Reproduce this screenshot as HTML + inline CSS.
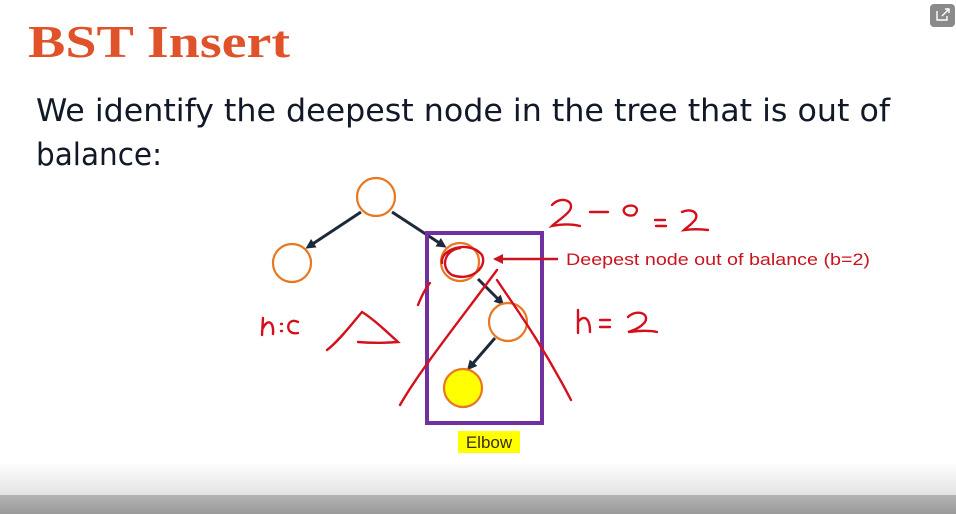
<!DOCTYPE html>
<html><head><style>
html,body{margin:0;padding:0;width:956px;height:514px;overflow:hidden;background:#fff;}
</style></head><body>
<svg width="956" height="514" viewBox="0 0 956 514" xmlns="http://www.w3.org/2000/svg" style="display:block">
<defs>
<linearGradient id="fade" x1="0" y1="0" x2="0" y2="1">
<stop offset="0" stop-color="#fff"/><stop offset="1" stop-color="#e2e2e2"/></linearGradient>
<linearGradient id="bar" x1="0" y1="0" x2="0" y2="1">
<stop offset="0" stop-color="#b4b4b4"/><stop offset="1" stop-color="#999"/></linearGradient>
<marker id="ar" markerWidth="10" markerHeight="10" refX="7" refY="5" orient="auto" markerUnits="userSpaceOnUse">
<path d="M0,0 L10,5 L0,10 Z" fill="#1e2a3a"/></marker>
<marker id="ar2" markerWidth="10" markerHeight="10" refX="8" refY="5" orient="auto" markerUnits="userSpaceOnUse">
<path d="M0,0 L10,5 L0,10 Z" fill="#c8141e"/></marker>
</defs>
<rect x="0" y="462" width="956" height="34" fill="url(#fade)"/>
<rect x="0" y="495" width="956" height="19" fill="url(#bar)"/>
<text x="28" y="57" font-family="Liberation Serif, serif" font-weight="bold" font-size="46" fill="#e0522a" textLength="262" lengthAdjust="spacingAndGlyphs">BST Insert</text>
<text x="36" y="121" font-family="DejaVu Sans Condensed, Liberation Sans, sans-serif" font-size="31" fill="#111827" textLength="854" lengthAdjust="spacingAndGlyphs">We identify the deepest node in the tree that is out of</text>
<text x="36" y="165" font-family="DejaVu Sans Condensed, Liberation Sans, sans-serif" font-size="31" fill="#111827" textLength="126" lengthAdjust="spacingAndGlyphs">balance:</text>
<rect x="930" y="4" width="25" height="23" rx="4" fill="#8a8a8a"/>
<path d="M937,11 v9 h10 v-4 M942,16 l7,-7 M945,9 h4 v4" stroke="#fff" stroke-width="1.4" fill="none"/>
<g stroke="#1e2a3a" stroke-width="3" fill="none">
<line x1="361" y1="212" x2="308" y2="247" marker-end="url(#ar)"/>
<line x1="392" y1="212" x2="444" y2="246" marker-end="url(#ar)"/>
<line x1="478" y1="279" x2="502" y2="303" marker-end="url(#ar)"/>
<line x1="495" y1="338" x2="469" y2="368" marker-end="url(#ar)"/>
</g>
<rect x="427" y="233" width="115" height="190" fill="none" stroke="#7030a0" stroke-width="4"/>
<g stroke="#e87722" stroke-width="2.2" fill="#fff">
<circle cx="376" cy="197" r="19"/>
<circle cx="292" cy="263" r="19"/>
<circle cx="460" cy="262" r="19"/>
<circle cx="508" cy="322" r="19"/>
<circle cx="463" cy="388" r="19" fill="#ffff00"/>
</g>
<rect x="458" y="431" width="62" height="22" fill="#ffff00"/>
<text x="489" y="448" text-anchor="middle" font-family="Liberation Sans, sans-serif" font-size="17" fill="#3a2a10">Elbow</text>
<line x1="558" y1="259" x2="495" y2="259" stroke="#c8141e" stroke-width="2.5" marker-end="url(#ar2)"/>
<text x="566" y="265" font-family="Liberation Sans, sans-serif" font-size="17" fill="#c8141e" textLength="304" lengthAdjust="spacingAndGlyphs">Deepest node out of balance (b=2)</text>
<g stroke="#d4101c" stroke-width="2.4" fill="none" stroke-linecap="round">
<path d="M442,263 C440,248 470,240 482,255 C488,268 470,282 452,275 C440,268 444,250 460,248"/>
<path d="M430,283 C424,290 420,300 418,305"/>
<path d="M400,405 C420,370 460,320 497,270"/>
<path d="M497,280 C510,300 540,340 571,400"/>
<path d="M327,350 C340,340 355,320 362,312 C372,318 385,330 398,342 C385,343 370,343 358,342"/>
<path d="M262,335 L263,318 M263,328 C268,318 274,322 273,334 M281,324 h1 M281,331 h1 M298,322 C286,316 284,336 298,333"/>
<path d="M552,205 C560,196 575,200 570,210 C566,216 556,222 552,226 C562,224 572,224 580,226"/>
<path d="M590,212 h18 M628,206 C620,208 624,218 634,215 C640,210 636,204 628,206"/>
<path d="M655,220 h10 M656,226 h10 M682,212 C690,208 700,212 695,220 C690,226 686,228 684,230 C692,229 700,229 708,230"/>
<path d="M578,310 L578,333 M578,322 C584,314 590,318 590,332 M600,320 h10 M600,327 h10 M628,317 C636,309 650,313 645,322 C640,328 634,330 628,332 C638,331 648,330 657,332"/>
</g>
</svg>
</body></html>
